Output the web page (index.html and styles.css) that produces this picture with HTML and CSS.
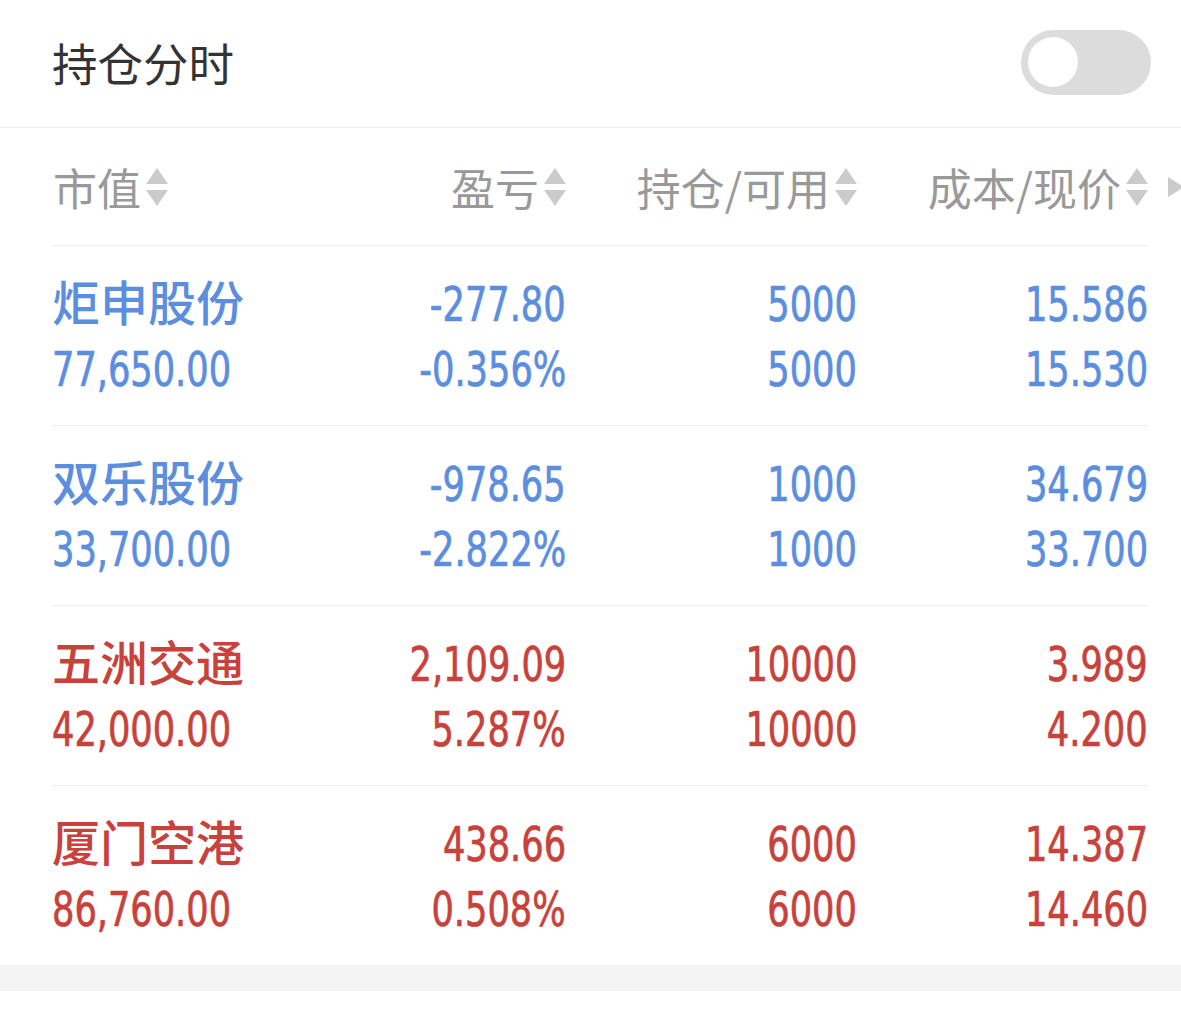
FILE: index.html
```html
<!DOCTYPE html>
<html lang="zh-CN">
<head>
<meta charset="utf-8">
<title>持仓分时</title>
<link rel="stylesheet" href="styles.css">
</head>
<body>
<div class="page">
  <div class="topbar">
    <div class="title">持仓分时</div>
    <div class="toggle"><span class="knob"></span></div>
  </div>
  <div class="table">
    <div class="thead">
      <div class="th th-left">市值<span class="sort"><i class="up"></i><i class="down"></i></span></div>
      <div class="th">盈亏<span class="sort"><i class="up"></i><i class="down"></i></span></div>
      <div class="th">持仓/可用<span class="sort"><i class="up"></i><i class="down"></i></span></div>
      <div class="th">成本/现价<span class="sort"><i class="up"></i><i class="down"></i></span></div>
      <span class="more"></span>
    </div>
    <div class="row down">
      <div class="cell cell-left"><div class="name">炬申股份</div><div class="num">77,650.00</div></div>
      <div class="cell"><div class="num">-277.80</div><div class="num">-0.356%</div></div>
      <div class="cell"><div class="num">5000</div><div class="num">5000</div></div>
      <div class="cell"><div class="num">15.586</div><div class="num">15.530</div></div>
    </div>
    <div class="row down">
      <div class="cell cell-left"><div class="name">双乐股份</div><div class="num">33,700.00</div></div>
      <div class="cell"><div class="num">-978.65</div><div class="num">-2.822%</div></div>
      <div class="cell"><div class="num">1000</div><div class="num">1000</div></div>
      <div class="cell"><div class="num">34.679</div><div class="num">33.700</div></div>
    </div>
    <div class="row up">
      <div class="cell cell-left"><div class="name">五洲交通</div><div class="num">42,000.00</div></div>
      <div class="cell"><div class="num">2,109.09</div><div class="num">5.287%</div></div>
      <div class="cell"><div class="num">10000</div><div class="num">10000</div></div>
      <div class="cell"><div class="num">3.989</div><div class="num">4.200</div></div>
    </div>
    <div class="row up">
      <div class="cell cell-left"><div class="name">厦门空港</div><div class="num">86,760.00</div></div>
      <div class="cell"><div class="num">438.66</div><div class="num">0.508%</div></div>
      <div class="cell"><div class="num">6000</div><div class="num">6000</div></div>
      <div class="cell"><div class="num">14.387</div><div class="num">14.460</div></div>
    </div>
  </div>
  <div class="band"></div>
</div>
</body>
</html>
```

FILE: styles.css
```css
html, body {
  margin: 0;
  padding: 0;
  background: #ffffff;
}

body {
  font-family: "Noto Sans CJK SC", "Noto Sans", sans-serif;
  color: #333333;
}

.page {
  width: 1181px;
}

.topbar {
  height: 127px;
  border-bottom: 1px solid #ebebeb;
  display: flex;
  align-items: center;
  justify-content: space-between;
  padding: 0 30px 0 52px;
}

.title {
  font-size: 45.5px;
  color: #333333;
  line-height: 1;
  margin-top: -2px;
}

.toggle {
  width: 130px;
  height: 65px;
  border-radius: 33px;
  background: #dcdcdc;
  display: flex;
  align-items: center;
  padding-left: 7px;
  box-sizing: border-box;
  margin-top: -3px;
}

.knob {
  width: 50px;
  height: 50px;
  border-radius: 50%;
  background: #ffffff;
}

.table {
  padding: 0 33px 0 52px;
}

.thead,
.row {
  display: grid;
  grid-template-columns: 250px 264px 291px 291px;
}

.thead {
  position: relative;
  height: 117px;
  align-items: center;
}

.th {
  display: flex;
  align-items: center;
  justify-content: flex-end;
  font-size: 44px;
  color: #999999;
  line-height: 1;
}

.th-left {
  justify-content: flex-start;
  padding-left: 1px;
}

.sort {
  display: flex;
  flex-direction: column;
  align-items: center;
  gap: 6px;
  margin-left: 5px;
  width: 22px;
}

.sort i {
  display: block;
  width: 0;
  height: 0;
  border-left: 11px solid transparent;
  border-right: 11px solid transparent;
}

.sort .up {
  border-bottom: 16px solid #cbcbcb;
}

.sort .down {
  border-top: 16px solid #cbcbcb;
}

.more {
  position: absolute;
  right: -33px;
  top: 49px;
  width: 0;
  height: 0;
  border-top: 10px solid transparent;
  border-bottom: 10px solid transparent;
  border-left: 16px solid #cbcbcb;
  margin-right: -3px;
}

.row {
  height: 180px;
  box-sizing: border-box;
  border-top: 1px solid #eeeeee;
  padding-top: 26px;
}

.cell {
  display: flex;
  flex-direction: column;
  align-items: flex-end;
}

.cell-left {
  align-items: flex-start;
}

.name {
  font-family: "Noto Sans CJK SC", sans-serif;
  font-size: 48px;
  line-height: 65px;
  height: 65px;
  font-weight: 500;
  margin-top: -4px;
  margin-bottom: 4px;
}

.num {
  font-family: "DejaVu Sans Condensed", "DejaVu Sans", sans-serif;
  font-stretch: condensed;
  font-size: 48px;
  line-height: 65px;
  height: 65px;
  transform: scaleX(0.815);
  transform-origin: right center;
  -webkit-text-stroke: 0.7px currentColor;
}

.cell-left .num {
  transform-origin: left center;
}

.row.down {
  color: #5b8ede;
}

.row.up {
  color: #c8413b;
}

.band {
  height: 26px;
  background: #f4f4f4;
}
```
